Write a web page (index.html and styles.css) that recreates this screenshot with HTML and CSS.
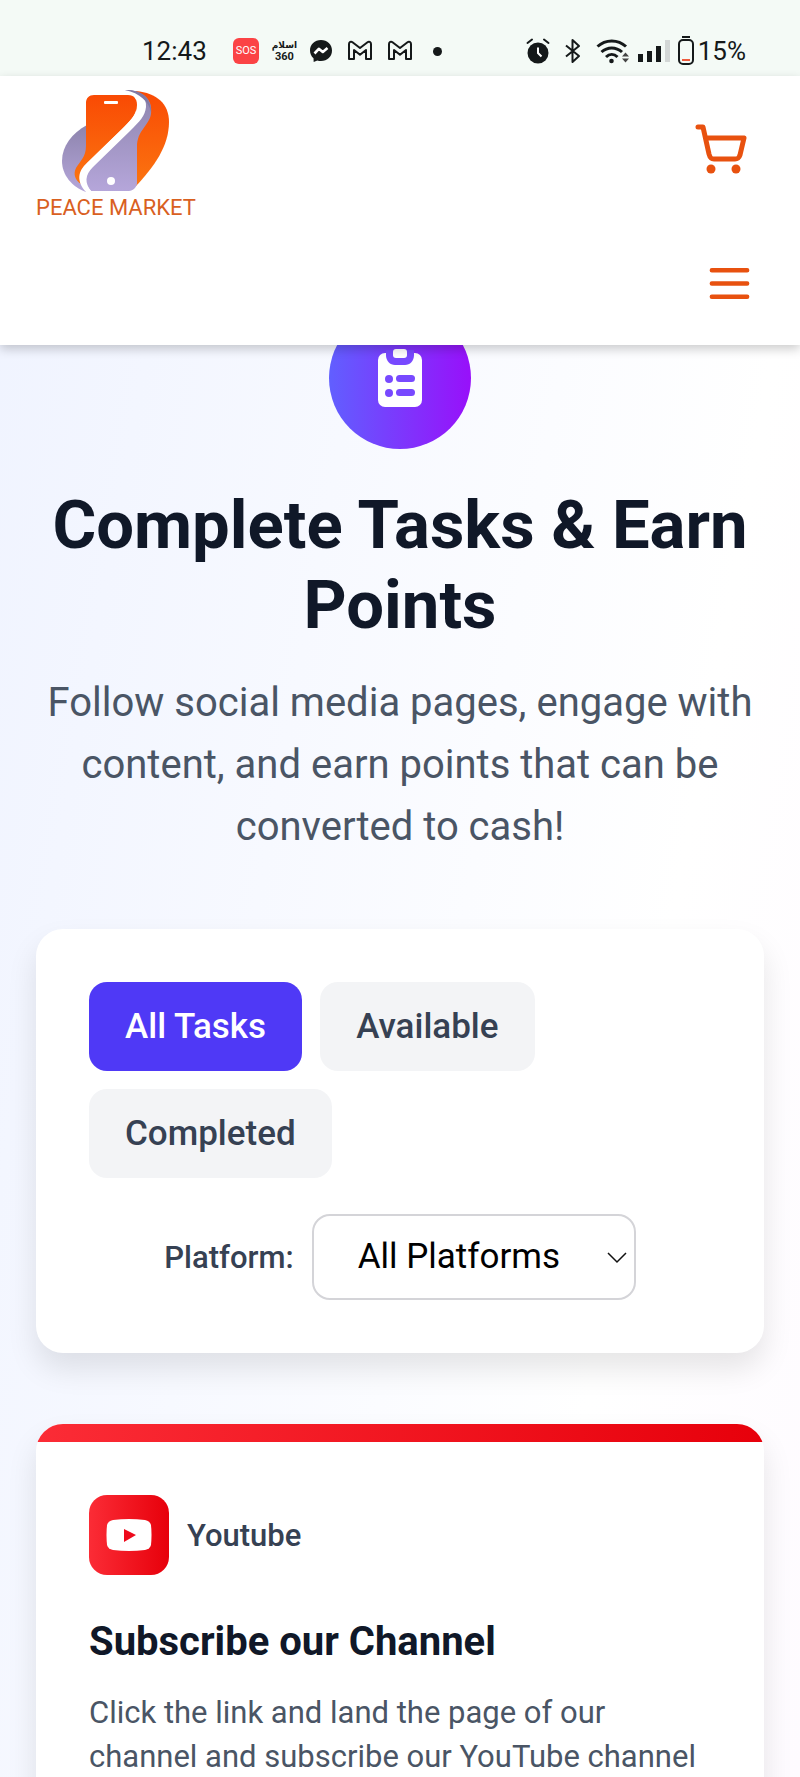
FILE: index.html
```
<!DOCTYPE html>
<html lang="en">
<head>
    <meta charset="UTF-8">
    <meta name="viewport" content="width=device-width, initial-scale=1.0">
    <title>Peace Market - Tasks</title>
    <link rel="stylesheet" href="styles.css">
</head>
<body>

    <div class="status-bar">
        <div class="status-left">
            <span class="clock">12:43</span>
            <span class="sos">SOS</span>
            <span class="app-360">
                <span class="app-ar" lang="ar">اسلام</span>
                <span class="app-num">360</span>
            </span>
            <svg width="24" height="24" viewBox="0 0 24 24">
                <path fill="#15191a" d="M12 1C5.700 1 1 5.500 1 11.500c0 3.200 1.300 5.800 3.500 7.700L4.700 23l3.600-1.600c1.200.4 2.400.6 3.700.6 6.300 0 11-4.500 11-10.500S18.300 1 12 1z"/>
                <path fill="none" stroke="#fff" stroke-width="2.600" stroke-linejoin="round" d="M5.500 14.500l4.300-4.700 4 3.200 4.700-4"/>
            </svg>
            <svg width="26" height="22" viewBox="0 0 26 22">
                <path fill="none" stroke="#15191a" stroke-width="2" stroke-linejoin="round" d="M2 19V4c0-2 2-3 3.500-1.800L13 8l7.500-5.800C22 1 24 2 24 4v15h-5V10l-6 4.800L7 10v9z"/>
            </svg>
            <svg width="26" height="22" viewBox="0 0 26 22">
                <path fill="none" stroke="#15191a" stroke-width="2" stroke-linejoin="round" d="M2 19V4c0-2 2-3 3.500-1.800L13 8l7.500-5.800C22 1 24 2 24 4v15h-5V10l-6 4.800L7 10v9z"/>
            </svg>
            <span class="dot"></span>
        </div>
        <div class="status-right">
            <div class="status-group">
                <!-- alarm -->
                <svg width="24" height="26" viewBox="0 0 24 26">
                    <circle cx="12" cy="15" r="10.500" fill="#15191a"/>
                    <path fill="none" stroke="#15191a" stroke-width="2" stroke-linecap="round" d="M1.500 5L6 1.500M22.500 5L18 1.500"/>
                    <path fill="none" stroke="#fff" stroke-width="2" d="M12 9.500V15l3.500 3.500"/>
                </svg>
                <!-- bluetooth -->
                <svg width="18" height="26" viewBox="0 0 18 26">
                    <path fill="none" stroke="#15191a" stroke-width="2" stroke-linejoin="round" d="M2 7.500L15 18l-6.500 6V2L15 8 2 18.500"/>
                </svg>
                <!-- wifi -->
                <svg width="34" height="26" viewBox="0 0 34 26">
                    <g fill="none" stroke="#15191a" stroke-width="3">
                        <path d="M1.500 8.500c8-7.500 20.500-7.500 28.500 0"/>
                        <path d="M5.500 14c6-5.500 14.500-5.500 20.500 0"/>
                        <path d="M10 19c3.500-3.300 8-3.300 11.500 0"/>
                    </g>
                    <circle cx="15.500" cy="23" r="2.300" fill="#15191a"/>
                    <path fill="#444" d="M26 18.500l3.500-4 3.500 4zM26 20.500l3.500 4 3.500-4z"/>
                </svg>
            </div>
            <!-- signal -->
            <svg width="32" height="24" viewBox="0 0 32 24">
                <path fill="#15191a" d="M0 15h5v8H0zM9 12h5v11H9zM18 7h5v16h-5z"/>
                <path fill="#d3d7d6" d="M27 1h5v22h-5z"/>
            </svg>
            <span class="battery">
                <svg width="16" height="30" viewBox="0 0 16 30">
                    <path fill="#15191a" d="M4 0h8v2H4z"/>
                    <rect x="1" y="4" width="14" height="24" rx="4" fill="none" stroke="#15191a" stroke-width="2"/>
                    <path fill="#ee5b3d" d="M4 23h8v2H4z"/>
                </svg>
                15%
            </span>
        </div>
    </div>

    <header class="header">
        <div class="header-top">
            <a href="#" class="logo">
                <svg width="108" height="104" viewBox="0 0 108 104">
                    <defs>
                        <linearGradient id="orange" x1="0" y1="0" x2="0" y2="1">
                            <stop offset="0" stop-color="#f94a04"/>
                            <stop offset="1" stop-color="#fb7410"/>
                        </linearGradient>
                        <linearGradient id="purple" x1="0" y1="0" x2="0" y2="1">
                            <stop offset="0" stop-color="#8d84ad"/>
                            <stop offset="1" stop-color="#b5a6da"/>
                        </linearGradient>
                    </defs>
                    <!-- left leaf and phone -->
                    <path fill="url(#purple)" d="M25 35C10 43 0 56 0 71c0 14 10 26 24 31z"/>
                    <path fill="url(#orange)" d="M32 5h34c6 0 9 4 9 10-1 11-6 15-17 26L25 73c-7 7-8 13-6 21-6-4-8-10-5-16 4-7 10-11 10-22V13c0-5 3-8 8-8z"/>
                    <!-- right leaf -->
                    <path fill="url(#orange)" d="M74 1c21 2 33 13 33 31 0 24-15 45-33 64z"/>
                    <path fill="url(#purple)" d="M63 0c19 0 28 10 26 24-2 12-14 16-14 33v36c0 4-4 8-8 8H29c-8-8-6-17 1-24l38-37c10-11 15-16 15-25C82 8 77 2 63 0z"/>
                    <!-- white band -->
                    <path fill="#fff" d="M63 0c14 1 22 7 21 17-1 9-6 14-16 24L31 77c-8 8-9 16-1 25h-6c-10-11-8-21 1-29l33-32c10-10 17-16 17-26 0-7-4-12-12-15z"/>
                    <path fill="#8079a5" d="M63 0c15-1 27 8 26 22-2-10-11-19-26-22z"/>
                    <rect x="42" y="11" width="14" height="3" rx="1" fill="#fff"/>
                    <circle cx="49" cy="91" r="4" fill="#fff"/>
                </svg>
                <span class="logo-text">PEACE MARKET</span>
            </a>
            <button class="icon-btn" aria-label="Cart">
                <svg width="53" height="53" viewBox="0 0 53 53">
                    <path fill="none" stroke="#e8510f" stroke-width="5" stroke-linecap="round" stroke-linejoin="round" d="M4 3h5l6 27c1 4 2 5 5 5h21c3 0 4-1 5-4l4-17H12"/>
                    <circle cx="17" cy="45" r="4.500" fill="#e8510f"/>
                    <circle cx="42" cy="45" r="4.500" fill="#e8510f"/>
                </svg>
            </button>
        </div>
        <button class="icon-btn" aria-label="Menu">
            <svg width="53" height="53" viewBox="0 0 24 24">
                <path fill="none" stroke="#e8510f" stroke-width="2" stroke-linecap="round" d="M4 6h16M4 12h16M4 18h16"/>
            </svg>
        </button>
    </header>

    <main class="content">
        <section class="hero">
            <div class="hero-icon">
                <svg width="44" height="60" viewBox="0 0 44 60">
                    <rect x="0" y="5" width="44" height="54" rx="7" fill="#fff"/>
                    <path fill="#7849ff" d="M8 2h28v5c0 6-4 10-9 10H17c-5 0-9-4-9-10z"/>
                    <rect x="15" y="1" width="14" height="9" rx="3" fill="#fff"/>
                    <circle cx="11" cy="31" r="4" fill="#7849ff"/>
                    <circle cx="11" cy="45" r="4" fill="#7849ff"/>
                    <rect x="18" y="27" width="19" height="7" rx="3.500" fill="#7849ff"/>
                    <rect x="18" y="41" width="19" height="7" rx="3.500" fill="#7849ff"/>
                </svg>
            </div>
            <h1>Complete Tasks &amp; Earn Points</h1>
            <p>Follow social media pages, engage with content, and earn points that can be converted to cash!</p>
        </section>

        <section class="card filters">
            <div class="tabs">
                <button class="tab active">All Tasks</button>
                <button class="tab">Available</button>
                <button class="tab">Completed</button>
            </div>
            <div class="platform">
                <label for="platform">Platform:</label>
                <div class="select-wrap">
                    <select id="platform">
                        <option>All Platforms</option>
                        <option>Youtube</option>
                    </select>
                    <svg class="chevron" width="20" height="12" viewBox="0 0 20 12">
                        <path fill="none" stroke="#111" stroke-width="1.500" d="M1 1l9 9 9-9"/>
                    </svg>
                </div>
            </div>
        </section>

        <article class="card task">
            <div class="task-stripe"></div>
            <div class="task-body">
                <div class="task-platform">
                    <span class="task-icon">
                        <svg width="46" height="32" viewBox="0 0 46 32">
                            <path fill="#fff" d="M7 1Q23-1 39 1q5 1 6 5 1 10 0 20-1 4-6 5-16 2-32 0-5-1-6-5-1-10 0-20 1-4 6-5z"/>
                            <path fill="#ee0a1c" d="M18 10l12 6-12 7z"/>
                        </svg>
                    </span>
                    <span>Youtube</span>
                </div>
                <h2>Subscribe our Channel</h2>
                <p>Click the link and land the page of our channel and subscribe our YouTube channel</p>
            </div>
        </article>
    </main>

</body>
</html>
```
FILE: styles.css
```
* {
    margin: 0;
    padding: 0;
    box-sizing: border-box;
    font-family: Roboto, "Noto Sans", sans-serif;
}

body {
    display: flex;
    flex-direction: column;
    height: 100vh;
    overflow: hidden;
    background: linear-gradient(100deg, #eff3ff, #ffffff 75%, #fefbff);
}

button {
    border: none;
    cursor: pointer;
}

/* Status bar */
.status-bar {
    display: flex;
    justify-content: space-between;
    align-items: center;
    flex-shrink: 0;
    height: 76px;
    padding: 26px 54px 0 142px;
    background: #f4faf6;
    color: #15191a;
    font-size: 26px;
}

.status-left,
.status-group {
    display: flex;
    align-items: center;
    gap: 14px;
}

.status-group {
    margin-right: -4px;
}

.status-right {
    display: flex;
    align-items: center;
    gap: 8px;
}

.clock {
    margin-right: 12px;
}

.status-right .status-group {
    margin-right: 0;
}

.sos {
    padding: 0 3px;
    border-radius: 6px;
    background: #fb4345;
    color: white;
    font-size: 11px;
    line-height: 26px;
}

.app-360 {
    display: flex;
    flex-direction: column;
    align-items: center;
    width: 22px;
}

.app-ar {
    font: bold 9px/12px "DejaVu Sans", sans-serif;
}

.app-num {
    font: bold 11px/12px Roboto, sans-serif;
}

.dot {
    width: 9px;
    height: 9px;
    margin-left: 6px;
    border-radius: 50%;
    background: #15191a;
}

.battery {
    display: flex;
    align-items: center;
    gap: 4px;
}

/* Header */
.header {
    position: relative;
    z-index: 1;
    display: flex;
    flex-direction: column;
    align-items: flex-end;
    gap: 35px;
    flex-shrink: 0;
    padding: 14px 44px 35px 36px;
    background: white;
    box-shadow: 0 4px 10px rgba(0, 0, 0, 0.2);
}

.header-top {
    display: flex;
    justify-content: space-between;
    align-items: center;
    width: 100%;
}

.logo {
    display: flex;
    flex-direction: column;
    align-items: center;
    text-decoration: none;
}

.logo-text {
    color: #d9601f;
    font-size: 22px;
    line-height: 28px;
}

.icon-btn {
    display: flex;
    background: none;
}

.header-top .icon-btn {
    margin: 0 9px 12px 0;
}

/* Content */
.content {
    display: flex;
    flex-direction: column;
    gap: 71px;
    padding: 0 36px;
}

.hero {
    display: flex;
    flex-direction: column;
    align-items: center;
    margin-top: -38px; /* tucked under the header */
    text-align: center;
}

.hero-icon {
    display: flex;
    justify-content: center;
    align-items: center;
    width: 142px;
    height: 142px;
    margin-bottom: 36px;
    border-radius: 50%;
    background: linear-gradient(to right, #615fff, #9810fa);
}

.hero h1 {
    margin-bottom: 27px;
    color: #101828;
    font-size: 67px;
    font-weight: 700;
    line-height: 80px;
}

.hero p {
    color: #4a5565;
    font-size: 40px;
    line-height: 62px;
}

.card {
    border-radius: 27px;
    background: white;
    box-shadow: 0 16px 30px rgba(0, 0, 0, 0.1);
}

.filters {
    display: flex;
    flex-direction: column;
    gap: 36px;
    padding: 53px;
}

.tabs {
    display: flex;
    flex-wrap: wrap;
    gap: 18px;
}

.tab {
    padding: 18px 36px;
    border-radius: 18px;
    background: #f3f4f6;
    color: #364153;
    font-size: 35px;
    font-weight: 500;
    line-height: 53px;
}

.tab.active {
    background: #4f39f6;
    color: white;
}

.platform {
    display: flex;
    justify-content: center;
    align-items: center;
    gap: 18px;
}

.platform label {
    color: #364153;
    font-size: 31px;
    font-weight: 500;
}

.select-wrap {
    position: relative;
}

.select-wrap select {
    appearance: none;
    padding: 18px 73px 18px 44px;
    border: 2px solid #d4d4d8;
    border-radius: 18px;
    background: white;
    color: black;
    font-size: 35px;
    line-height: 46px;
}

.chevron {
    position: absolute;
    top: 38px;
    right: 9px;
    pointer-events: none;
}

/* Task card */
.task {
    overflow: hidden;
    flex-shrink: 0;
}

.task-stripe {
    height: 18px;
    background: linear-gradient(to right, #fb2c36, #e7000b);
}

.task-body {
    padding: 53px;
}

.task-platform {
    display: flex;
    align-items: center;
    gap: 18px;
    margin-bottom: 36px;
    color: #364153;
    font-size: 31px;
    font-weight: 500;
}

.task-icon {
    display: flex;
    justify-content: center;
    align-items: center;
    width: 80px;
    height: 80px;
    border-radius: 18px;
    background: linear-gradient(to right, #fb2c36, #e7000b);
}

.task h2 {
    margin-bottom: 18px;
    color: #101828;
    font-size: 40px;
    font-weight: 700;
    line-height: 62px;
}

.task p {
    color: #4a5565;
    font-size: 31px;
    line-height: 44px;
}
```
